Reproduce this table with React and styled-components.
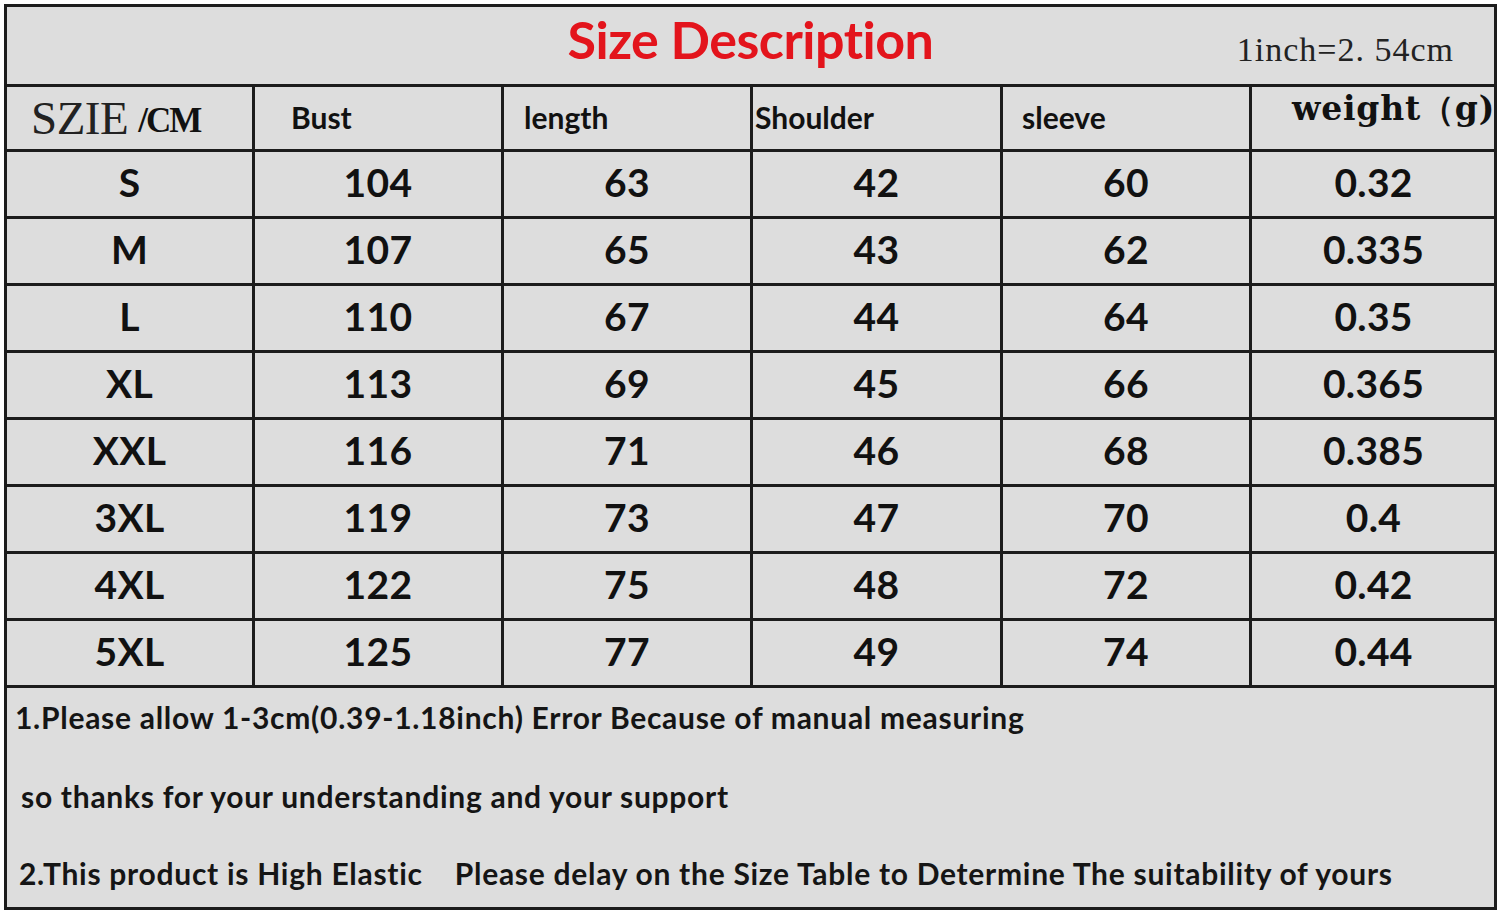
import React from "react";
import styled, { createGlobalStyle } from "styled-components";

const Global = createGlobalStyle`
  html, body { margin: 0; padding: 0; background: #ffffff; }
  body { width: 1500px; height: 912px; overflow: hidden; }
`;

const Page = styled.div`
  padding: 4px 3px 2px 4px;
  box-sizing: border-box;
  width: 1500px;
  height: 912px;
`;

const Sheet = styled.div`
  box-sizing: border-box;
  width: 100%;
  height: 100%;
  border: 3px solid #1c1c1c;
  background: #dddddd;
  display: flex;
  flex-direction: column;
  overflow: hidden;
`;

const TitleRow = styled.div`
  flex-shrink: 0;
  height: 77px;
  display: grid;
  grid-template-columns: 1fr auto 1fr;
  align-items: center;
  border-bottom: 3px solid #1c1c1c;
`;

const Title = styled.div`
  grid-column: 2;
  font-family: Lato, "Open Sans", sans-serif;
  font-weight: 700;
  font-size: 52px;
  color: #e3141c;
  letter-spacing: -0.5px;
  transform: translateY(-7px);
`;

const Ratio = styled.div`
  grid-column: 3;
  justify-self: end;
  margin-right: 40px;
  font-family: "Liberation Serif", "DejaVu Serif", serif;
  font-size: 34px;
  color: #222;
  letter-spacing: 1px;
  transform: translateY(4px);
`;

const Table = styled.div`
  flex-shrink: 0;
  display: grid;
  grid-template-columns: 248px 249px 249px 250px 249px 1fr;
`;

const Cell = styled.div`
  box-sizing: border-box;
  height: ${(p) => (p.$head ? 65 : 67)}px;
  border-right: ${(p) => (p.$last ? "none" : "3px solid #1c1c1c")};
  border-bottom: 3px solid #1c1c1c;
  display: flex;
  align-items: center;
  justify-content: ${(p) => (p.$left ? "flex-start" : "center")};
  padding-left: ${(p) => p.$pad || 0}px;
  overflow: visible;
  white-space: nowrap;
`;

const Num = styled.span`
  font-family: Lato, "Open Sans", sans-serif;
  font-weight: 700;
  font-size: 39px;
  color: #111;
  letter-spacing: 0.3px;
  transform: translateY(-2px);
`;

const HeadLabel = styled.span`
  font-family: Lato, "Open Sans", sans-serif;
  font-weight: 700;
  font-size: 30px;
  color: #111;
  letter-spacing: 0px;
  transform: translateY(-1px);
`;

const SizeLabel = styled.span`
  font-family: "Liberation Serif", "DejaVu Serif", serif;
  font-size: 47px;
  color: #222;
  letter-spacing: -0.5px;
`;

const Unit = styled.span`
  font-family: "Liberation Serif", "DejaVu Serif", serif;
  font-weight: 700;
  font-size: 35px;
  color: #111;
  margin-left: 10px;
  letter-spacing: -2px;
  transform: translateY(3px);
`;

const Weight = styled.span`
  font-family: "DejaVu Serif", "Liberation Serif", serif;
  font-weight: 700;
  font-size: 33px;
  color: #111;
  letter-spacing: 0.8px;
  transform: translateY(-9px);
  margin-left: 40px;
`;

const Notes = styled.div`
  flex: 1;
  display: flex;
  flex-direction: column;
`;

const Note = styled.div`
  height: ${(p) => p.$h}px;
  line-height: ${(p) => p.$h}px;
  padding-left: ${(p) => p.$indent}px;
  font-family: Lato, "Open Sans", sans-serif;
  font-weight: 700;
  font-size: 30px;
  color: #151515;
  letter-spacing: 0.72px;
  white-space: pre;
`;

const headers = [
  { label: "Bust", pad: 36 },
  { label: "length", pad: 20 },
  { label: "Shoulder", pad: 2 },
  { label: "sleeve", pad: 19 },
];

const rows = [
  ["S", "104", "63", "42", "60", "0.32"],
  ["M", "107", "65", "43", "62", "0.335"],
  ["L", "110", "67", "44", "64", "0.35"],
  ["XL", "113", "69", "45", "66", "0.365"],
  ["XXL", "116", "71", "46", "68", "0.385"],
  ["3XL", "119", "73", "47", "70", "0.4"],
  ["4XL", "122", "75", "48", "72", "0.42"],
  ["5XL", "125", "77", "49", "74", "0.44"],
];

export default function App() {
  return (
    <>
      <Global />
      <Page>
        <Sheet>
          <TitleRow>
            <Title>Size Description</Title>
            <Ratio>1inch=2. 54cm</Ratio>
          </TitleRow>
          <Table>
            <Cell $head $left $pad={24}>
              <SizeLabel>SZIE</SizeLabel>
              <Unit>/CM</Unit>
            </Cell>
            {headers.map((h) => (
              <Cell key={h.label} $head $left $pad={h.pad}>
                <HeadLabel>{h.label}</HeadLabel>
              </Cell>
            ))}
            <Cell $head $left $last>
              <Weight>weight（g)</Weight>
            </Cell>
            {rows.map((r) =>
              r.map((v, i) => (
                <Cell key={r[0] + i} $last={i === 5}>
                  <Num>{v}</Num>
                </Cell>
              ))
            )}
          </Table>
          <Notes>
            <Note $h={58} $indent={8}>1.Please allow 1-3cm(0.39-1.18inch) Error Because of manual measuring</Note>
            <Note $h={100} $indent={14}>so thanks for your understanding and your support</Note>
            <Note $h={54} $indent={12}>2.This product is High Elastic    Please delay on the Size Table to Determine The suitability of yours</Note>
          </Notes>
        </Sheet>
      </Page>
    </>
  );
}
